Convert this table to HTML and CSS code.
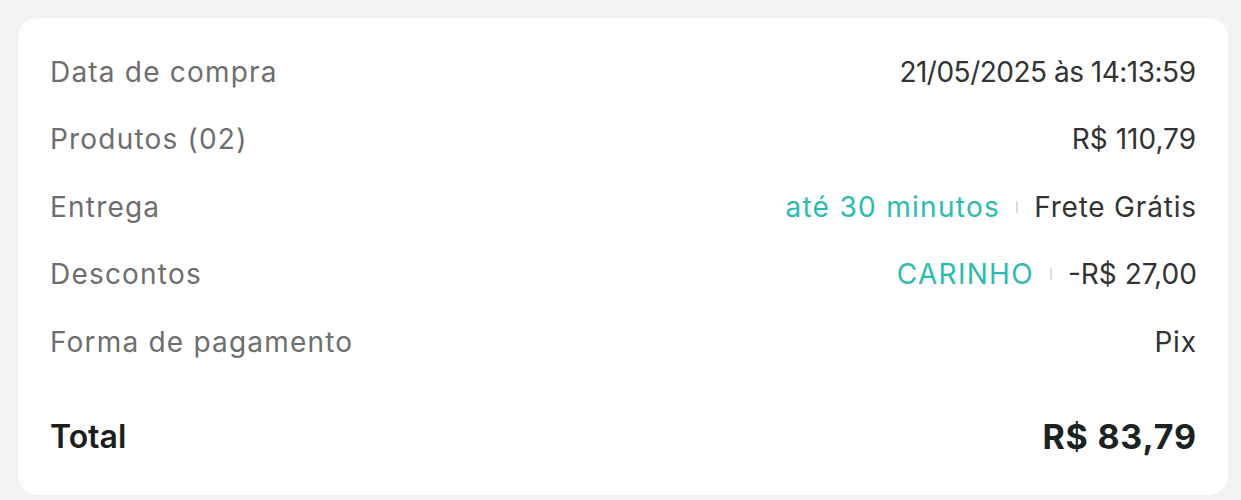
FILE: index.html
```html
<!DOCTYPE html>
<html>
<head>
    <title>Resumo do pedido</title>
    <link rel="stylesheet" href="styles.css">
</head>
<body>
    <div class="summary-card">
        <div class="summary-row">
            <span class="label">Data de compra</span>
            <span class="value date">21/05/2025 às 14:13:59</span>
        </div>
        <div class="summary-row">
            <span class="label">Produtos (02)</span>
            <span class="value num">R$ 110,79</span>
        </div>
        <div class="summary-row">
            <span class="label">Entrega</span>
            <span class="value">
                <span class="highlight">até 30 minutos</span>
                <span class="divider"></span>
                <span>Frete Grátis</span>
            </span>
        </div>
        <div class="summary-row">
            <span class="label">Descontos</span>
            <span class="value">
                <span class="highlight">CARINHO</span>
                <span class="divider"></span>
                <span class="num">-R$ 27,00</span>
            </span>
        </div>
        <div class="summary-row">
            <span class="label">Forma de pagamento</span>
            <span class="value">Pix</span>
        </div>
        <div class="summary-row total-row">
            <span class="total-label">Total</span>
            <span class="total-value">R$ 83,79</span>
        </div>
    </div>
</body>
</html>
```

FILE: styles.css
```css
body {
    margin: 0;
    padding: 18px 13px 0 18px;
    background-color: #f1f2f4;
    font-family: Inter, "Open Sans", sans-serif;
}
.summary-card {
    background-color: #fff;
    border-radius: 20px;
    padding: 20px 32px 25px 32px;
    height: 477px;
    box-sizing: border-box;
}
.summary-row {
    display: flex;
    justify-content: space-between;
    align-items: center;
    height: 67.5px;
    font-size: 28px;
}
.label {
    color: #6e6e6e;
    letter-spacing: 1.2px;
}
.value {
    color: #333;
    display: flex;
    align-items: center;
    gap: 16px;
    letter-spacing: 0.8px;
    margin-right: -0.8px;
}
.value.date {
    letter-spacing: -0.5px;
    margin-right: 0.5px;
}
.num {
    letter-spacing: 0;
}
.value.num {
    margin-right: 0;
}
.highlight {
    color: #2bbcb0;
    letter-spacing: 1.3px;
}
/* thin separator between two values */
.divider {
    width: 2px;
    height: 12px;
    background-color: #ddd;
}
.total-row {
    margin-top: 27px;
}
.total-label {
    font-size: 32px;
    font-weight: 600;
    color: #1d1d1d;
}
.total-value {
    font-size: 34px;
    font-weight: 700;
    color: #1a2322;
    letter-spacing: 0.8px;
    margin-right: -0.8px;
}
```
